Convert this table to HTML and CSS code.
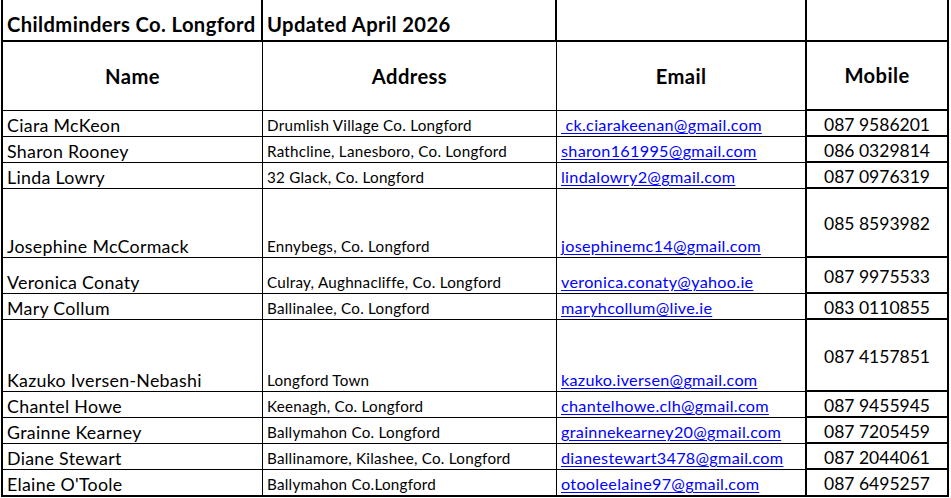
FILE: index.html
```html
<!DOCTYPE html>
<html lang="en">
<head>
<meta charset="utf-8">
<title>Childminders Co. Longford</title>
<link rel="stylesheet" href="styles.css">
</head>
<body>
<div class="sheet">
  <div class="cell c1 title">Childminders Co. Longford</div>
  <div class="cell c2 title">Updated April 2026</div>
  <div class="cell c3 title"></div>
  <div class="cell c4 title"></div>

  <div class="cell c1 head">Name</div>
  <div class="cell c2 head">Address</div>
  <div class="cell c3 head">Email</div>
  <div class="cell c4 head">Mobile</div>

  <div class="cell c1 name">Ciara McKeon</div>
  <div class="cell c2 addr">Drumlish Village Co. Longford</div>
  <div class="cell c3 mail"><a href="#">&nbsp;ck.ciarakeenan@gmail.com</a></div>
  <div class="cell c4 tel">087 9586201</div>

  <div class="cell c1 name">Sharon Rooney</div>
  <div class="cell c2 addr">Rathcline, Lanesboro, Co. Longford</div>
  <div class="cell c3 mail"><a href="#">sharon161995@gmail.com</a></div>
  <div class="cell c4 tel">086 0329814</div>

  <div class="cell c1 name">Linda Lowry</div>
  <div class="cell c2 addr">32 Glack, Co. Longford</div>
  <div class="cell c3 mail"><a href="#">lindalowry2@gmail.com</a></div>
  <div class="cell c4 tel">087 0976319</div>

  <div class="cell c1 name">Josephine McCormack</div>
  <div class="cell c2 addr">Ennybegs, Co. Longford</div>
  <div class="cell c3 mail"><a href="#">josephinemc14@gmail.com</a></div>
  <div class="cell c4 tel">085 8593982</div>

  <div class="cell c1 name">Veronica Conaty</div>
  <div class="cell c2 addr">Culray, Aughnacliffe, Co. Longford</div>
  <div class="cell c3 mail"><a href="#">veronica.conaty@yahoo.ie</a></div>
  <div class="cell c4 tel">087 9975533</div>

  <div class="cell c1 name">Mary Collum</div>
  <div class="cell c2 addr">Ballinalee, Co. Longford</div>
  <div class="cell c3 mail"><a href="#">maryhcollum@live.ie</a></div>
  <div class="cell c4 tel">083 0110855</div>

  <div class="cell c1 name">Kazuko Iversen-Nebashi</div>
  <div class="cell c2 addr">Longford Town</div>
  <div class="cell c3 mail"><a href="#">kazuko.iversen@gmail.com</a></div>
  <div class="cell c4 tel">087 4157851</div>

  <div class="cell c1 name">Chantel Howe</div>
  <div class="cell c2 addr">Keenagh, Co. Longford</div>
  <div class="cell c3 mail"><a href="#">chantelhowe.clh@gmail.com</a></div>
  <div class="cell c4 tel">087 9455945</div>

  <div class="cell c1 name">Grainne Kearney</div>
  <div class="cell c2 addr">Ballymahon Co. Longford</div>
  <div class="cell c3 mail"><a href="#">grainnekearney20@gmail.com</a></div>
  <div class="cell c4 tel">087 7205459</div>

  <div class="cell c1 name">Diane Stewart</div>
  <div class="cell c2 addr">Ballinamore, Kilashee, Co. Longford</div>
  <div class="cell c3 mail"><a href="#">dianestewart3478@gmail.com</a></div>
  <div class="cell c4 tel">087 2044061</div>

  <div class="cell c1 name last">Elaine O'Toole</div>
  <div class="cell c2 addr last">Ballymahon Co.Longford</div>
  <div class="cell c3 mail last"><a href="#">otooleelaine97@gmail.com</a></div>
  <div class="cell c4 tel last">087 6495257</div>
</div>
</body>
</html>
```

FILE: styles.css
```css
html, body {
  margin: 0;
  padding: 0;
  background: #ffffff;
}

.sheet {
  margin-left: 1px;
  width: 946px;
  display: grid;
  grid-template-columns: 260px 294px 250px 142px;
  grid-template-rows: 42px 69px 26px 26px 26px 69px 36px 26px 72px 26px 26px 26px 27px;
  border-left: 2px solid #000;
  font-family: "Lato", "Liberation Sans", sans-serif;
  color: #000;
}

.cell {
  box-sizing: border-box;
  display: flex;
  align-items: flex-end;
  border-bottom: 1px solid #000;
  border-right: 1px solid #000;
  padding: 0 3px 1px 4px;
  line-height: 20px;
  white-space: nowrap;
  overflow: hidden;
}

.c3 {
  border-right: 2px solid #000;
}

.c4 {
  border-right: 2px solid #000;
  border-bottom: 2px solid #000;
  justify-content: center;
}

.title {
  border-bottom: 2px solid #000;
  border-right-width: 2px;
  font-weight: 700;
  font-size: 20.2px;
  letter-spacing: 0.4px;
  padding-bottom: 6px;
}

.head {
  align-items: center;
  justify-content: center;
  font-weight: 700;
  font-size: 20.2px;
  letter-spacing: 0.4px;
  padding: 0 4px 1px 4px;
}

.name {
  font-size: 17.8px;
  letter-spacing: 0.3px;
}

.addr {
  font-size: 15.2px;
  letter-spacing: 0.25px;
}

.mail {
  font-size: 16.2px;
  letter-spacing: 0.3px;
}

.mail a {
  color: #0000ff;
  text-decoration: underline;
  text-underline-offset: 2px;
}

.tel {
  font-size: 17.5px;
  align-items: center;
  padding: 3px 0 0 0;
}

.last {
  border-bottom-width: 2px;
}
```
